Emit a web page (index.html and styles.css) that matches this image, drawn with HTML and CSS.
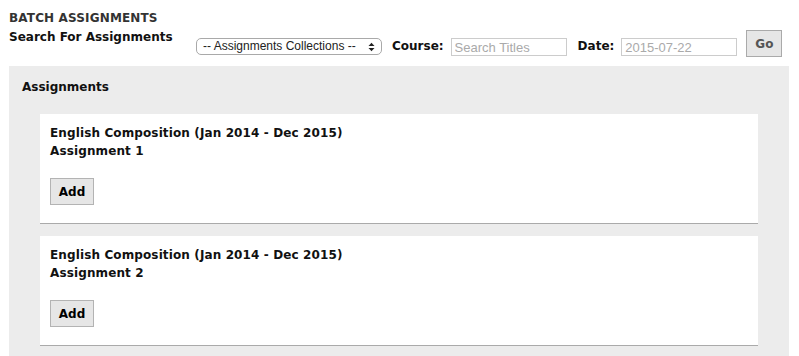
FILE: index.html
```html
<!DOCTYPE html>
<html lang="en">
<head>
    <meta charset="UTF-8">
    <meta name="viewport" content="width=device-width, initial-scale=1.0">
    <title>Batch Assignments</title>
    <link rel="stylesheet" href="styles.css">
</head>
<body>
    <div class="page">
        <h1 class="page-title">BATCH ASSIGNMENTS</h1>

        <form class="search-row" onsubmit="return false;">
            <div class="search-label">Search For Assignments</div>
            <div class="select-wrap">
                <select class="collection-select">
                    <option>-- Assignments Collections --</option>
                </select>
                <svg class="select-arrows" width="7" height="10" viewBox="0 0 7 10">
                    <path d="M0.5 4 L3.5 0.8 L6.5 4 Z" fill="#222"/>
                    <path d="M0.5 6 L3.5 9.2 L6.5 6 Z" fill="#222"/>
                </svg>
            </div>
            <label class="field-label" for="course">Course:</label>
            <input class="field-input" type="text" id="course" placeholder="Search Titles">
            <label class="field-label date-label" for="date">Date:</label>
            <input class="field-input" type="text" id="date" placeholder="2015-07-22">
            <button class="go-btn" type="submit">Go</button>
        </form>

        <div class="panel">
            <h2 class="panel-title">Assignments</h2>

            <div class="card">
                <div class="card-title">English Composition (Jan 2014 - Dec 2015)</div>
                <div class="card-title">Assignment 1</div>
                <button class="add-btn" type="button">Add</button>
            </div>

            <div class="card">
                <div class="card-title">English Composition (Jan 2014 - Dec 2015)</div>
                <div class="card-title">Assignment 2</div>
                <button class="add-btn" type="button">Add</button>
            </div>
        </div>
    </div>
</body>
</html>
```

FILE: styles.css
```css
body {
    margin: 0;
    font-family: "DejaVu Sans", Verdana, sans-serif;
    font-size: 12px;
    color: #111;
    background: #fff;
}
.page {
    padding: 0 10px 0 9px;
}
.page-title {
    margin: 0;
    padding-top: 9px;
    font-size: 12px;
    line-height: 18px;
    font-weight: bold;
    color: #333;
    letter-spacing: 0.15px;
}
/* search bar */
.search-row {
    display: flex;
    align-items: flex-start;
    margin-top: 1px;
}
.search-label {
    font-weight: bold;
    font-size: 12px;
    line-height: 18px;
    width: 187px;
}
.select-wrap {
    position: relative;
    margin-top: 10px;
}
.collection-select {
    appearance: none;
    -webkit-appearance: none;
    width: 186px;
    height: 17px;
    padding: 0 0 0 6px;
    border: 1px solid #a9a9a9;
    border-radius: 5px;
    background: #fff;
    font-family: "Liberation Sans", Arial, sans-serif;
    font-size: 12px;
    line-height: 15px;
    color: #222;
    box-sizing: border-box;
}
.select-arrows {
    position: absolute;
    right: 7px;
    top: 4px;
}
.field-label {
    font-weight: bold;
    line-height: 18px;
    margin-top: 9px;
    margin-left: 10px;
    margin-right: 7px;
}
.date-label {
    margin-left: 11px;
}
.field-input {
    width: 116px;
    height: 18px;
    margin-top: 10px;
    padding: 1px 3px;
    border: 1px solid #ccc;
    font-family: "Liberation Sans", Arial, sans-serif;
    font-size: 13px;
    box-sizing: border-box;
}
.field-input::placeholder {
    color: #aaa;
}
.go-btn {
    margin-left: 9px;
    margin-top: 2px;
    width: 36px;
    height: 27px;
    padding: 0;
    background: #e6e6e6;
    border: 1px solid #aaa;
    font-family: "DejaVu Sans", Verdana, sans-serif;
    font-size: 12px;
    font-weight: bold;
    color: #555;
    cursor: pointer;
}
/* assignments list */
.panel {
    margin-top: 9px;
    background: #ececec;
    padding: 12px 31px 20px 31px;
}
.panel-title {
    margin: 0 0 18px -18px;
    font-size: 12px;
    line-height: 18px;
    font-weight: bold;
}
.card {
    background: #fff;
    border-bottom: 1px solid #aaa;
    padding: 10px 10px 18px 10px;
    margin-bottom: 12px;
}
.card-title {
    font-weight: bold;
    line-height: 18px;
    letter-spacing: 0.12px;
}
.add-btn {
    display: block;
    margin-top: 18px;
    width: 44px;
    height: 27px;
    padding: 0;
    background: #e6e6e6;
    border: 1px solid #b3b3b3;
    font-family: "DejaVu Sans", Verdana, sans-serif;
    font-size: 12px;
    font-weight: bold;
    color: #000;
    cursor: pointer;
}
```
